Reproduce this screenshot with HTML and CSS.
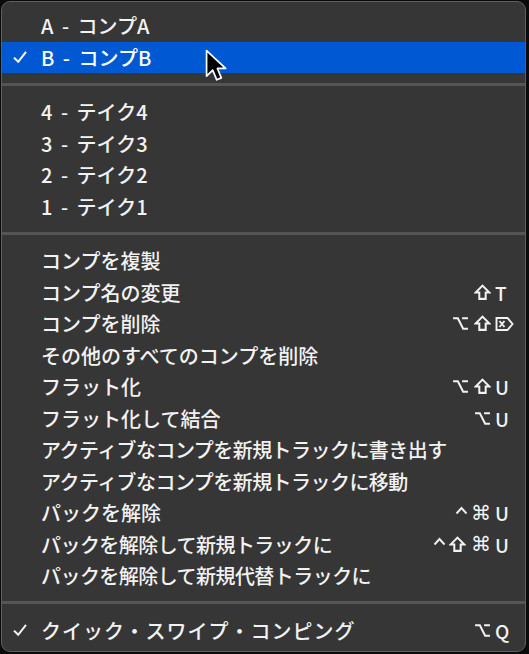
FILE: index.html
```html
<!DOCTYPE html>
<html lang="ja">
<head>
<meta charset="utf-8">
<link rel="stylesheet" href="styles.css">
</head>
<body>
<div class="menu">
  <div class="group">
    <div class="item"><span class="check"></span><span class="label num">A - コンプA</span><span class="sc"></span></div>
    <div class="item selected"><span class="check"><svg viewBox="0 0 14 12" width="14" height="12"><path d="M1 6.6 L5.2 10.8 L13 0.8" fill="none" stroke="#fff" stroke-width="2"/></svg></span><span class="label num">B - コンプB</span><span class="sc"></span></div>
  </div>
  <div class="sep"></div>
  <div class="group">
    <div class="item"><span class="check"></span><span class="label num">4 - テイク4</span><span class="sc"></span></div>
    <div class="item"><span class="check"></span><span class="label num">3 - テイク3</span><span class="sc"></span></div>
    <div class="item"><span class="check"></span><span class="label num">2 - テイク2</span><span class="sc"></span></div>
    <div class="item"><span class="check"></span><span class="label num">1 - テイク1</span><span class="sc"></span></div>
  </div>
  <div class="sep"></div>
  <div class="group">
    <div class="item"><span class="check"></span><span class="label">コンプを複製</span><span class="sc"></span></div>
    <div class="item"><span class="check"></span><span class="label">コンプ名の変更</span><span class="sc"><span class="mod"><svg class="g" viewBox="0 0 16 16" width="17" height="17"><path d="M8 1.5 L14.5 8 L11 8 L11 14 L5 14 L5 8 L1.5 8 Z"/></svg></span><span class="key">T</span></span></div>
    <div class="item"><span class="check"></span><span class="label">コンプを削除</span><span class="sc"><span class="mod"><svg class="g" viewBox="0 0 16 16" width="17" height="17"><path d="M1 3 H5.5 L10.5 13 H15 M9.5 3 H15"/></svg><svg class="g" viewBox="0 0 16 16" width="17" height="17"><path d="M8 1.5 L14.5 8 L11 8 L11 14 L5 14 L5 8 L1.5 8 Z"/></svg></span><span class="key"><svg class="g" viewBox="0 0 19 16" width="19" height="16"><path d="M1.5 2 H12.5 L17.5 8 L12.5 14 H1.5 Z M4.5 5 L9.5 11 M9.5 5 L4.5 11"/></svg></span></span></div>
    <div class="item"><span class="check"></span><span class="label">その他のすべてのコンプを削除</span><span class="sc"></span></div>
    <div class="item"><span class="check"></span><span class="label">フラット化</span><span class="sc"><span class="mod"><svg class="g" viewBox="0 0 16 16" width="17" height="17"><path d="M1 3 H5.5 L10.5 13 H15 M9.5 3 H15"/></svg><svg class="g" viewBox="0 0 16 16" width="17" height="17"><path d="M8 1.5 L14.5 8 L11 8 L11 14 L5 14 L5 8 L1.5 8 Z"/></svg></span><span class="key">U</span></span></div>
    <div class="item"><span class="check"></span><span class="label">フラット化して結合</span><span class="sc"><span class="mod"><svg class="g" viewBox="0 0 16 16" width="17" height="17"><path d="M1 3 H5.5 L10.5 13 H15 M9.5 3 H15"/></svg></span><span class="key">U</span></span></div>
    <div class="item"><span class="check"></span><span class="label tight">アクティブなコンプを新規トラックに書き出す</span><span class="sc"></span></div>
    <div class="item"><span class="check"></span><span class="label tight">アクティブなコンプを新規トラックに移動</span><span class="sc"></span></div>
    <div class="item"><span class="check"></span><span class="label">パックを解除</span><span class="sc"><span class="mod"><svg class="g caret" viewBox="0 0 13 16" width="13" height="16"><path d="M1.5 8.5 L6.5 3 L11.5 8.5"/></svg><span class="cmd">⌘</span></span><span class="key">U</span></span></div>
    <div class="item"><span class="check"></span><span class="label tight">パックを解除して新規トラックに</span><span class="sc"><span class="mod"><svg class="g caret" viewBox="0 0 13 16" width="13" height="16"><path d="M1.5 8.5 L6.5 3 L11.5 8.5"/></svg><svg class="g" viewBox="0 0 16 16" width="17" height="17"><path d="M8 1.5 L14.5 8 L11 8 L11 14 L5 14 L5 8 L1.5 8 Z"/></svg><span class="cmd">⌘</span></span><span class="key">U</span></span></div>
    <div class="item"><span class="check"></span><span class="label tight">パックを解除して新規代替トラックに</span><span class="sc"></span></div>
  </div>
  <div class="sep"></div>
  <div class="group">
    <div class="item"><span class="check"><svg viewBox="0 0 14 12" width="14" height="12"><path d="M1 6.6 L5.2 10.8 L13 0.8" fill="none" stroke="#f2f2f2" stroke-width="2"/></svg></span><span class="label wide">クイック・スワイプ・コンピング</span><span class="sc"><span class="mod"><svg class="g" viewBox="0 0 16 16" width="17" height="17"><path d="M1 3 H5.5 L10.5 13 H15 M9.5 3 H15"/></svg></span><span class="key">Q</span></span></div>
  </div>
  <svg class="cursor" viewBox="0 0 14 21" width="22" height="33"><path d="M1 1 L1 17.2 L4.9 13.4 L7.5 19.6 L10.4 18.4 L7.9 12.4 L13.1 12.4 Z" fill="#000" stroke="#fff" stroke-width="1.1" stroke-linejoin="round"/></svg>
</div>
</body>
</html>
```
FILE: styles.css
```css
html, body {
  margin: 0;
  padding: 0;
  background: #0b0b0b;
}
body {
  width: 529px;
  height: 654px;
  overflow: hidden;
}
.menu {
  position: relative;
  box-sizing: border-box;
  margin: 1px 0 0 1px;
  width: 525px;
  height: 651px;
  border: 1px solid #5e5e5e;
  border-radius: 9px;
  background: #363636;
  padding: 8px 0 4px;
  font-family: "Noto Sans CJK JP", "Noto Sans", sans-serif;
  font-size: 20px;
  font-weight: 500;
  color: #f2f2f2;
  overflow: hidden;
}
.item {
  display: flex;
  align-items: center;
  height: 31.5px;
  line-height: 31.5px;
  padding-right: 8px;
  white-space: nowrap;
}
.item.selected {
  background: #0058d2;
  color: #fff;
}
.check {
  width: 39px;
  flex: none;
  display: flex;
  align-items: center;
  padding-left: 11px;
  box-sizing: border-box;
}
.check svg { display: block; }
.label {
  flex: 1;
}
.label.num {
  word-spacing: 4px;
}
.label.wide {
  letter-spacing: 1px;
}
.label.tight {
  letter-spacing: -0.55px;
}
.sc {
  display: flex;
  align-items: center;
}
.mod {
  display: flex;
  align-items: center;
  gap: 5px;
  padding-right: 4px;
}
.g {
  display: block;
  fill: none;
  stroke: #f2f2f2;
  stroke-width: 1.9;
  stroke-linejoin: miter;
}
.g.caret {
  margin-right: -2px;
}
.cmd {
  font-family: "DejaVu Sans", sans-serif;
  font-size: 20px;
  line-height: 16px;
}
.key {
  width: 22px;
  display: flex;
  align-items: center;
  font-size: 19px;
}
.sep {
  height: 3px;
  background: #555555;
  margin: 9.5px 0 10.5px;
}
.cursor {
  position: absolute;
  left: 203px;
  top: 47px;
}
```
